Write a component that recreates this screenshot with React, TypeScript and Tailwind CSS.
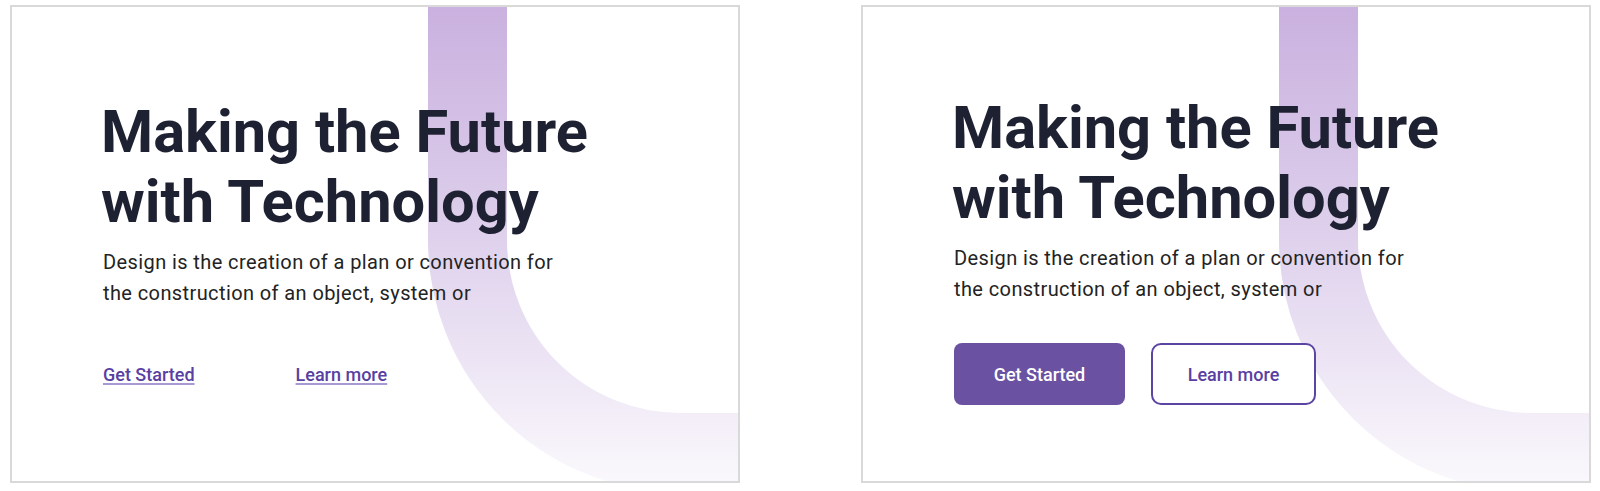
import React from "react";

function Swoosh({ id }: { id: string }) {
  return (
    <svg
      className="absolute inset-0 h-full w-full"
      viewBox="0 0 726 474"
      preserveAspectRatio="none"
      aria-hidden="true"
    >
      <defs>
        <linearGradient id={id} x1="0" y1="0" x2="0" y2="474" gradientUnits="userSpaceOnUse">
          <stop offset="0" stopColor="#cab1df" />
          <stop offset="0.35" stopColor="#d8c7e8" />
          <stop offset="0.7" stopColor="#eae1f3" />
          <stop offset="1" stopColor="#faf8fc" />
        </linearGradient>
      </defs>
      <path
        d="M 455.5 -20 L 455.5 233 A 212.5 212.5 0 0 0 668 445.5 L 760 445.5"
        fill="none"
        stroke={`url(#${id})`}
        strokeWidth="79"
      />
    </svg>
  );
}

function Panel({ variant }: { variant: "links" | "buttons" }) {
  const isButtons = variant === "buttons";
  return (
    <div className="relative h-[478px] w-[730px] shrink-0 overflow-hidden border-2 border-[#d9d9d9] bg-white">
      <Swoosh id={isButtons ? "g2" : "g1"} />
      <div
        className={
          isButtons
            ? "relative z-10 flex flex-col pl-[91px] pt-[86px]"
            : "relative z-10 flex flex-col pl-[91px] pt-[90px]"
        }
      >
        <h1 className="ml-[-2px] text-[59.6px] font-bold leading-[70px] text-[#1e2132]">
          Making the Future
          <br />
          with Technology
        </h1>
        <p
          className={
            isButtons
              ? "mt-[10px] text-[20px] leading-[30.6px] tracking-[0.4px] text-[#232323]"
              : "mt-[10px] text-[20px] leading-[30.6px] tracking-[0.4px] text-[#232323]"
          }
        >
          Design is the creation of a plan or convention for
          <br />
          the construction of an object, system or
        </p>
        {isButtons ? (
          <div className="mt-[39px] flex gap-[26px]">
            <button className="flex h-[62px] w-[171px] items-center justify-center rounded-[8px] bg-[#6a51a1] text-[18px] font-medium text-white">
              Get Started
            </button>
            <button className="flex h-[62px] w-[165px] items-center justify-center rounded-[10px] border-2 border-[#5c44a2] bg-white text-[18px] font-medium text-[#5a3fa2]">
              Learn more
            </button>
          </div>
        ) : (
          <div className="mt-[35px] flex h-[62px] items-center gap-[101px]">
            <a
              href="#"
              className="text-[18px] font-medium text-[#5a3fa2] underline decoration-[#a898d3] decoration-2 underline-offset-[2px]"
            >
              Get Started
            </a>
            <a
              href="#"
              className="text-[18px] font-medium text-[#5a3fa2] underline decoration-[#a898d3] decoration-2 underline-offset-[2px]"
            >
              Learn more
            </a>
          </div>
        )}
      </div>
    </div>
  );
}

export default function App() {
  return (
    <div
      className="flex h-[491px] w-[1600px] gap-[121px] bg-white pl-[10px] pt-[5px]"
      style={{ fontFamily: "Roboto, 'Liberation Sans', sans-serif" }}
    >
      <Panel variant="links" />
      <Panel variant="buttons" />
    </div>
  );
}
